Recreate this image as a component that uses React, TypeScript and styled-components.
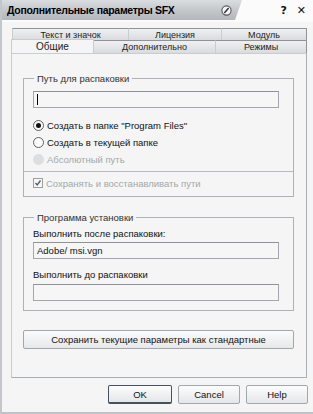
import React from 'react';
import styled, { createGlobalStyle } from 'styled-components';

const GlobalStyle = createGlobalStyle`
  html, body {
    margin: 0;
    padding: 0;
    background: #ffffff;
  }
  body {
    font-family: "Liberation Sans", Arial, sans-serif;
    font-size: 9.5px;
    color: #111;
  }
`;

const Window = styled.div`
  width: 313px;
  height: 414px;
  box-sizing: border-box;
  background: #f4f5f4;
  border-left: 2px solid #c3c7cb;
  border-bottom: 2px solid #bfc3c7;
  display: flex;
  flex-direction: column;
  overflow: hidden;
`;

const TitleBar = styled.div`
  height: 22px;
  display: flex;
  align-items: stretch;
  background: #fbfbfb;
`;

const TitleBand = styled.div`
  width: 240px;
  height: 20px;
  display: flex;
  align-items: center;
  padding-left: 5px;
  box-sizing: border-box;
  background: linear-gradient(to bottom, #dadddf 0%, #c4c8cb 50%, #b3b7bb 100%);
  clip-path: polygon(0 0, 100% 0, calc(100% - 7px) 100%, 0 100%);
`;

const TitleText = styled.span`
  font-size: 10.5px;
  font-weight: bold;
  letter-spacing: -0.3px;
  color: #000;
  flex: 1;
`;

const RollIcon = styled.svg`
  width: 11px;
  height: 11px;
  margin-right: 10px;
`;

const TitleButtons = styled.div`
  flex: 1;
  display: flex;
  align-items: center;
  justify-content: flex-end;
  gap: 10px;
  padding-right: 7px;
  padding-bottom: 2px;
`;

const TitleGlyph = styled.span`
  font-family: "DejaVu Sans", sans-serif;
  font-weight: bold;
  font-size: 11px;
  color: #111;
`;

const Body = styled.div`
  flex: 1;
  display: flex;
  flex-direction: column;
  padding: 6px 5px 0 9px;
`;

const TabRow = styled.div<{ $offset: number }>`
  display: flex;
  height: ${p => (p.$offset ? 12 : 13)}px;
  padding-left: ${p => p.$offset}px;
`;

const Tab = styled.div<{ $w: number; $active?: boolean }>`
  width: ${p => p.$w}px;
  box-sizing: border-box;
  display: flex;
  align-items: center;
  justify-content: center;
  font-size: ${p => (p.$active ? 10 : 9)}px;
  color: #222;
  border: 1px solid #8e9398;
  border-bottom: none;
  border-left-color: #c9ccd0;
  margin-left: -1px;
  background: ${p =>
    p.$active ? '#f4f5f4' : 'linear-gradient(to bottom, #eef0f1, #d9dcdf)'};
  ${p => (p.$active ? 'height: 14px; margin-top: -1px; position: relative; z-index: 1; border-color: #c9ccd0;' : '')}
  &:first-child {
    margin-left: 0;
  }
`;

const Panel = styled.div`
  width: 296px;
  height: 325px;
  box-sizing: border-box;
  border: 1px solid #a8adb2;
  border-left-color: #c9ccd0;
  border-top-color: #c9ccd0;
  display: flex;
  flex-direction: column;
  padding: 19px 12px 0 11px;
`;

const Group = styled.fieldset<{ $mt?: number }>`
  margin: ${p => p.$mt ?? 0}px 0 0;
  padding: 0 9px;
  border: 1px solid #aeb2b6;
  display: flex;
  flex-direction: column;
  width: 271px;
  box-sizing: border-box;
`;

const Legend = styled.legend`
  padding: 0 3px;
  margin-left: 1px;
  font-size: 9.5px;
  color: #333;
`;

const Field = styled.div<{ $mt: number }>`
  height: 17px;
  box-sizing: border-box;
  margin-top: ${p => p.$mt}px;
  border: 1px solid #a3a7ab;
  border-top-color: #8f9398;
  background: #f5f6f5;
  display: flex;
  align-items: center;
  padding-left: 3px;
  font-size: 9.5px;
  width: 246px;
`;

const Caret = styled.span`
  display: block;
  width: 1px;
  height: 11px;
  background: #000;
`;

const OptionRow = styled.div<{ $mt: number; $disabled?: boolean }>`
  display: flex;
  align-items: center;
  gap: 3px;
  height: 12px;
  margin-top: ${p => p.$mt}px;
  color: ${p => (p.$disabled ? '#a4a8ac' : '#111')};
  font-size: 9.5px;
`;

const Radio = styled.span<{ $checked?: boolean; $disabled?: boolean }>`
  width: 11px;
  height: 11px;
  box-sizing: border-box;
  border-radius: 50%;
  border: 1px solid ${p => (p.$disabled ? '#dcdee0' : '#5d6166')};
  background: ${p => (p.$disabled ? '#dcdee0' : '#fafafa')};
  display: flex;
  align-items: center;
  justify-content: center;
  &::after {
    content: '';
    display: ${p => (p.$checked ? 'block' : 'none')};
    width: 5px;
    height: 5px;
    border-radius: 50%;
    background: #111;
  }
`;

const CheckBox = styled.span`
  width: 10px;
  height: 10px;
  box-sizing: border-box;
  border: 1px solid #9a9ea2;
  background: #f7f7f7;
  display: flex;
  align-items: center;
  justify-content: center;
`;

const Separator = styled.div`
  height: 1px;
  background: #b7bbbf;
  margin: 6px -9px 0;
`;

const Label = styled.div<{ $mt: number }>`
  margin-top: ${p => p.$mt}px;
  font-size: 9.5px;
  height: 12px;
  line-height: 12px;
  color: #111;
`;

const Spacer = styled.div<{ $h: number }>`
  height: ${p => p.$h}px;
`;

const WideButton = styled.button`
  margin-top: 19px;
  width: 271px;
  height: 19px;
  box-sizing: border-box;
  border: 1px solid #a2a7ac;
  border-radius: 2px;
  background: linear-gradient(to bottom, #fbfbfb, #e6e8ea);
  font-family: "Liberation Sans", Arial, sans-serif;
  font-size: 9.5px;
  color: #111;
  padding: 0;
`;

const ButtonRow = styled.div`
  display: flex;
  justify-content: flex-end;
  gap: 6px;
  margin-top: 7px;
`;

const DialogButton = styled.button<{ $default?: boolean }>`
  width: ${p => (p.$default ? 64 : 62)}px;
  height: 19px;
  box-sizing: border-box;
  border: 1px solid ${p => (p.$default ? '#45515e' : '#a2a7ac')};
  border-bottom-width: ${p => (p.$default ? 2 : 1)}px;
  border-radius: 2px;
  background: linear-gradient(to bottom, #fdfdfd, #e4e6e8);
  font-family: "Liberation Sans", Arial, sans-serif;
  font-size: 9.5px;
  color: #111;
  padding: 0;
`;

export default function App() {
  return (
    <>
      <GlobalStyle />
      <Window>
        <TitleBar>
          <TitleBand>
            <TitleText>Дополнительные параметры SFX</TitleText>
            <RollIcon viewBox="0 0 11 11">
              <circle cx="5.5" cy="5.5" r="4.6" fill="#f2f3f4" stroke="#555a60" strokeWidth="1.1" />
              <line x1="3.3" y1="8" x2="7.6" y2="3" stroke="#2b2f33" strokeWidth="1.4" />
            </RollIcon>
          </TitleBand>
          <TitleButtons>
            <TitleGlyph>?</TitleGlyph>
            <TitleGlyph>✕</TitleGlyph>
          </TitleButtons>
        </TitleBar>
        <Body>
          <TabRow $offset={1}>
            <Tab $w={117}>Текст и значок</Tab>
            <Tab $w={94}>Лицензия</Tab>
            <Tab $w={86}>Модуль</Tab>
          </TabRow>
          <TabRow $offset={0}>
            <Tab $w={83} $active>Общие</Tab>
            <Tab $w={123}>Дополнительно</Tab>
            <Tab $w={92}>Режимы</Tab>
          </TabRow>
          <Panel>
            <Group>
              <Legend>Путь для распаковки</Legend>
              <Field $mt={7}>
                <Caret />
              </Field>
              <OptionRow $mt={11}>
                <Radio $checked />
                Создать в папке "Program Files"
              </OptionRow>
              <OptionRow $mt={5}>
                <Radio />
                Создать в текущей папке
              </OptionRow>
              <OptionRow $mt={5} $disabled>
                <Radio $disabled />
                Абсолютный путь
              </OptionRow>
              <Separator />
              <OptionRow $mt={5} $disabled>
                <CheckBox>
                  <svg width="8" height="8" viewBox="0 0 8 8">
                    <path d="M1.5 4 L3.2 6 L6.5 1.5" fill="none" stroke="#55595d" strokeWidth="1.3" />
                  </svg>
                </CheckBox>
                Сохранять и восстанавливать пути
              </OptionRow>
              <Spacer $h={7} />
            </Group>
            <Group $mt={15}>
              <Legend>Программа установки</Legend>
              <Label $mt={5}>Выполнить после распаковки:</Label>
              <Field $mt={2}>Adobe/ msi.vgn</Field>
              <Label $mt={10}>Выполнить до распаковки</Label>
              <Field $mt={3} />
              <Spacer $h={9} />
            </Group>
            <WideButton>Сохранить текущие параметры как стандартные</WideButton>
          </Panel>
          <ButtonRow>
            <DialogButton $default>OK</DialogButton>
            <DialogButton>Cancel</DialogButton>
            <DialogButton>Help</DialogButton>
          </ButtonRow>
        </Body>
      </Window>
    </>
  );
}
